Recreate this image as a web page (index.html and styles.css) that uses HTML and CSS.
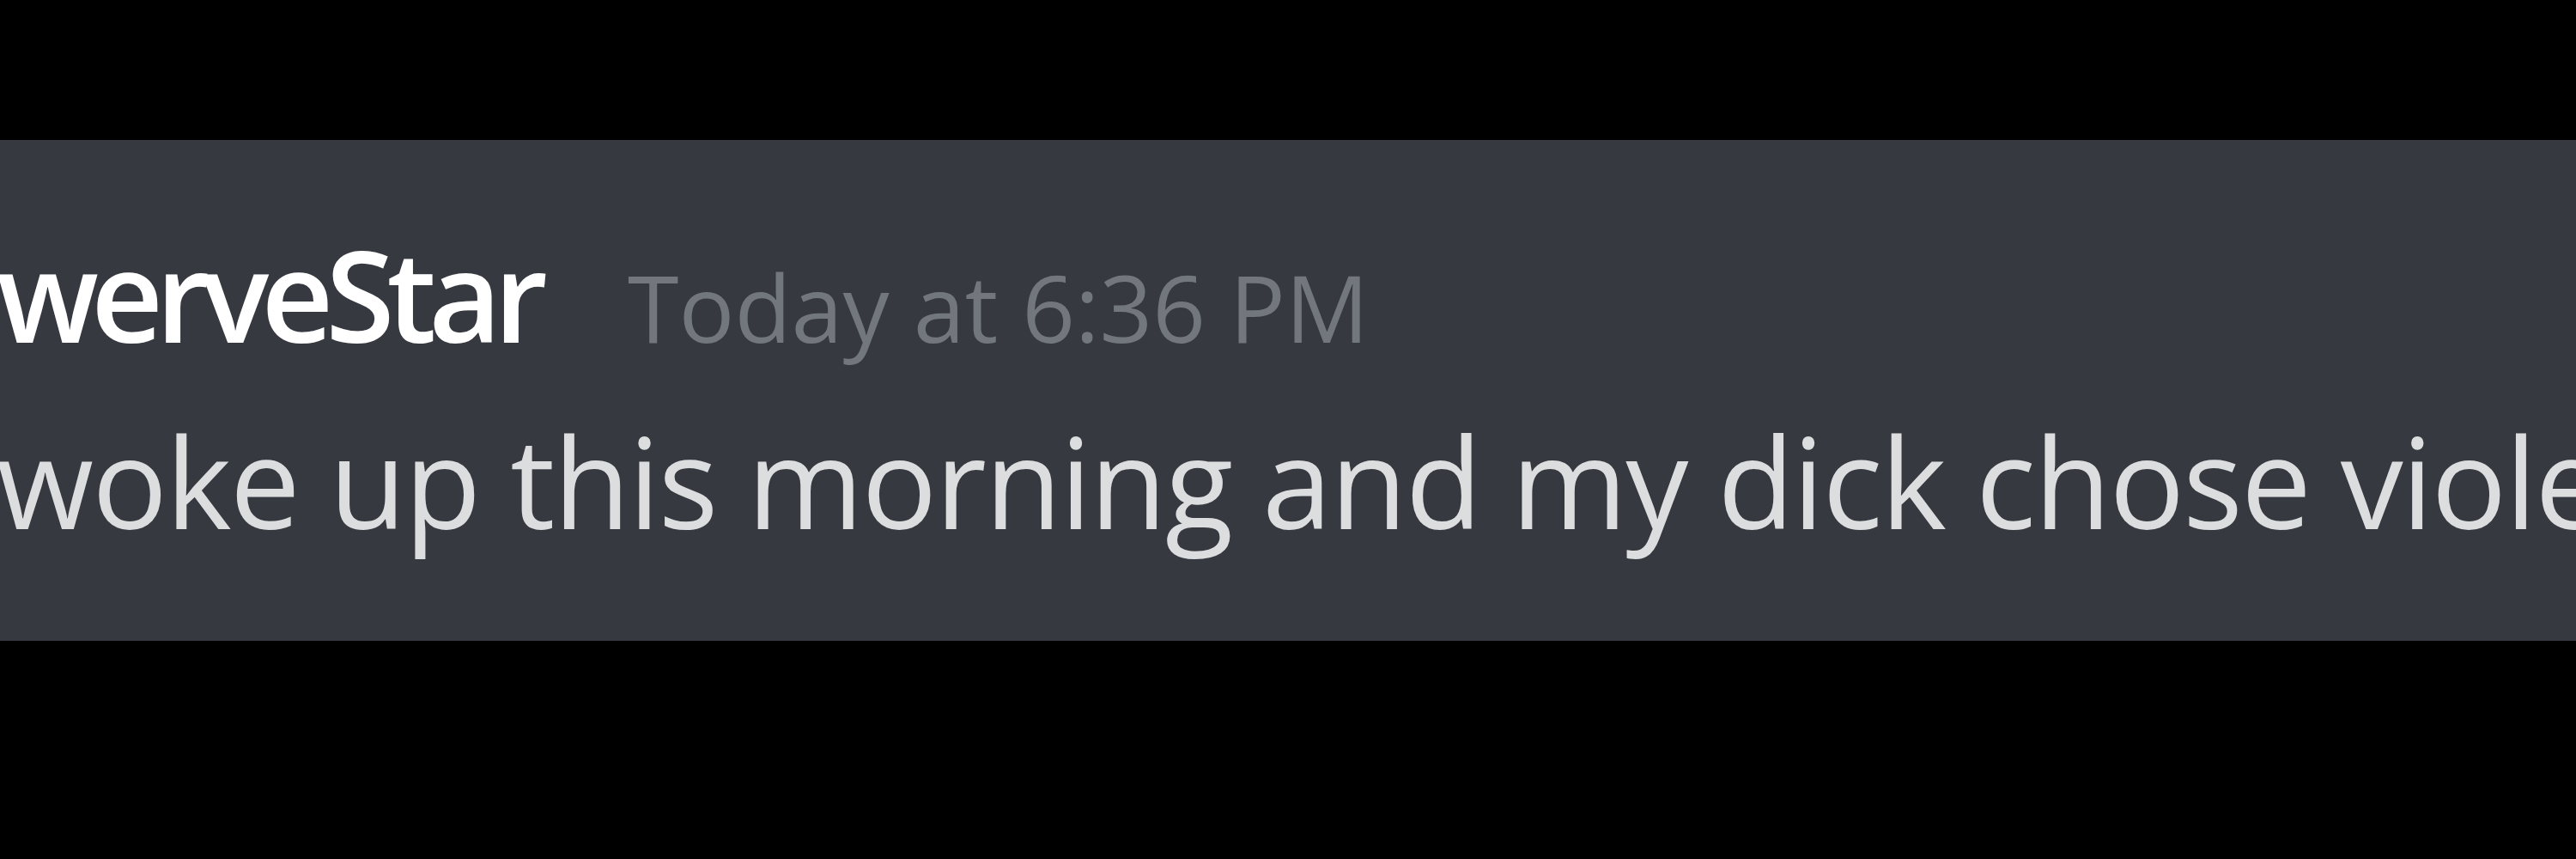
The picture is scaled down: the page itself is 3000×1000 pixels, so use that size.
FILE: index.html
```html
<!DOCTYPE html>
<html lang="en">

<head>
    <meta charset="UTF-8">
    <meta name="viewport" content="width=device-width, initial-scale=1.0">
    <title>Message</title>
    <link rel="stylesheet" href="styles.css">
</head>

<body>

    <div class="message">
        <!-- header: author + timestamp -->
        <div class="message-header">
            <span class="username">werveStar</span>
            <span class="timestamp">Today at 6:36 PM</span>
        </div>
        <div class="message-content">woke up this morning and my dick chose violence</div>
    </div>

</body>

</html>
```

FILE: styles.css
```css
body {
  margin: 0;
  background-color: #000000;
  font-family: "Open Sans", "Noto Sans", Arial, sans-serif;
  height: 1000px;
  overflow: hidden;
}
.message {
  margin-top: 163px;
  height: 583px;
  background-color: #36393f;
  padding-top: 107px;
  box-sizing: border-box;
  overflow: hidden;
  white-space: nowrap;
}
.message-header {
  display: flex;
  align-items: baseline;
  gap: 102px;
  margin-left: -4px;
  line-height: 146px;
  height: 146px;
}
.username {
  font-size: 146px;
  font-weight: 600;
  letter-spacing: -9px;
  color: #ffffff;
}
.timestamp {
  font-size: 108px;
  color: #72767d;
}
.message-content {
  margin-top: 71px;
  margin-left: -4px;
  font-size: 146px;
  line-height: 146px;
  letter-spacing: -2px;
  color: #dcddde;
}
```
